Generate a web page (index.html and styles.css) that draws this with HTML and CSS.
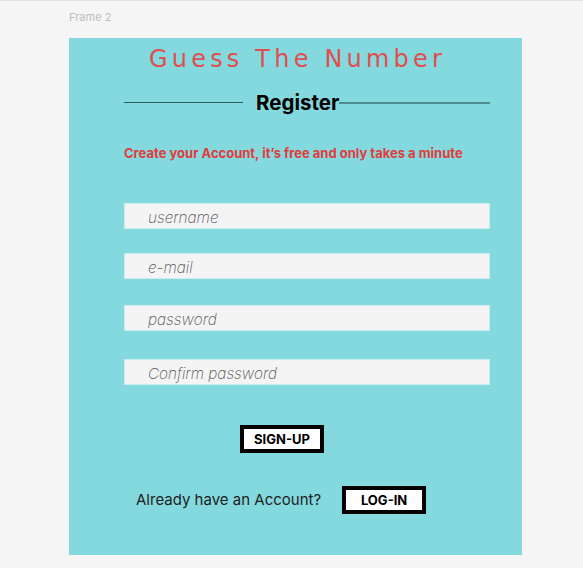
FILE: index.html
```html
<!DOCTYPE html>
<html>
<head>
<meta charset="utf-8">
<link rel="stylesheet" href="styles.css">
</head>
<body>
<div class="canvas">
  <div class="frame-label">Frame 2</div>
  <main class="frame">
    <h1 class="title">Guess The Number</h1>
    <div class="divider">
      <span class="line line-left"></span>
      <h2 class="heading">Register</h2>
      <span class="line line-right"></span>
    </div>
    <p class="tagline">Create your Account, it’s free and only takes a minute</p>
    <form class="form">
      <input class="field f1" type="text" placeholder="username">
      <input class="field f2" type="email" placeholder="e-mail">
      <input class="field f3" type="password" placeholder="password">
      <input class="field f4" type="password" placeholder="Confirm password">
      <div class="signup-row"><button type="button" class="btn">SIGN-UP</button></div>
      <div class="login-row">
        <span class="already">Already have an Account?</span>
        <button type="button" class="btn">LOG-IN</button>
      </div>
    </form>
  </main>
</div>
</body>
</html>
```
FILE: styles.css
```css
html, body {
  margin: 0;
  padding: 0;
  background: #f5f5f5;
}
.canvas {
  width: 583px;
  height: 568px;
  box-sizing: border-box;
  border-top: 1px solid #e3e3e3;
  padding: 9px 0 0 69px;
  font-family: Inter, "Liberation Sans", sans-serif;
}
.frame-label {
  font-size: 11px;
  line-height: 14px;
  color: #bdbdbd;
  margin-bottom: 14px;
}
.frame {
  width: 453px;
  height: 517px;
  background: #83d9de;
  box-sizing: border-box;
  padding: 0 32px 0 55px;
  display: flex;
  flex-direction: column;
}
.title {
  margin: 6px -32px 0 -55px;
  font-family: "DejaVu Sans", sans-serif;
  font-weight: normal;
  font-size: 24px;
  line-height: 30px;
  letter-spacing: 4.2px;
  color: #e04e4e;
  text-align: center;
  padding-left: 4px;
}
.divider {
  display: flex;
  align-items: center;
  margin-top: 17px;
  height: 24px;
}
.line {
  display: block;
  height: 1px;
}
.line-left {
  width: 119px;
  background: #2c5c5f;
  margin-right: 13px;
  margin-top: -2px;
}
.line-right {
  flex: 1;
  height: 2px;
  background: #4f8c90;
  margin-top: -1px;
}
.heading {
  margin: 0;
  font-size: 20.5px;
  font-weight: 700;
  color: #000;
  line-height: 24px;
}
.tagline {
  margin: 30px 0 0 0;
  font-size: 13px;
  font-weight: 700;
  line-height: 16px;
  color: #e03c3c;
}
.form {
  display: flex;
  flex-direction: column;
  margin-top: 42px;
}
.field {
  width: 366px;
  height: 26px;
  box-sizing: border-box;
  border: 1px solid #c9ecee;
  background: #f4f4f4;
  padding: 2px 0 0 23px;
  margin: 0;
  font-family: Inter, "Liberation Sans", sans-serif;
  font-weight: 200;
  font-style: italic;
  font-size: 15.3px;
  color: #555;
  outline: none;
}
.field::placeholder {
  color: #555;
  opacity: 1;
}
.f2 { margin-top: 24px; }
.f3 { margin-top: 26px; }
.f4 { margin-top: 28px; }
.signup-row {
  display: flex;
  margin-top: 40px;
  padding-left: 116px;
}
.btn {
  width: 84px;
  height: 28px;
  box-sizing: border-box;
  border: 4px solid #000;
  background: #fff;
  font-family: Inter, "Liberation Sans", sans-serif;
  font-weight: 700;
  font-size: 13px;
  color: #000;
  padding: 0;
  margin: 0;
}
.login-row {
  display: flex;
  align-items: center;
  margin-top: 33px;
  padding-left: 12px;
}
.already {
  font-size: 15px;
  color: #1d1d1d;
  margin-right: 21px;
  margin-top: -2px;
}
```
